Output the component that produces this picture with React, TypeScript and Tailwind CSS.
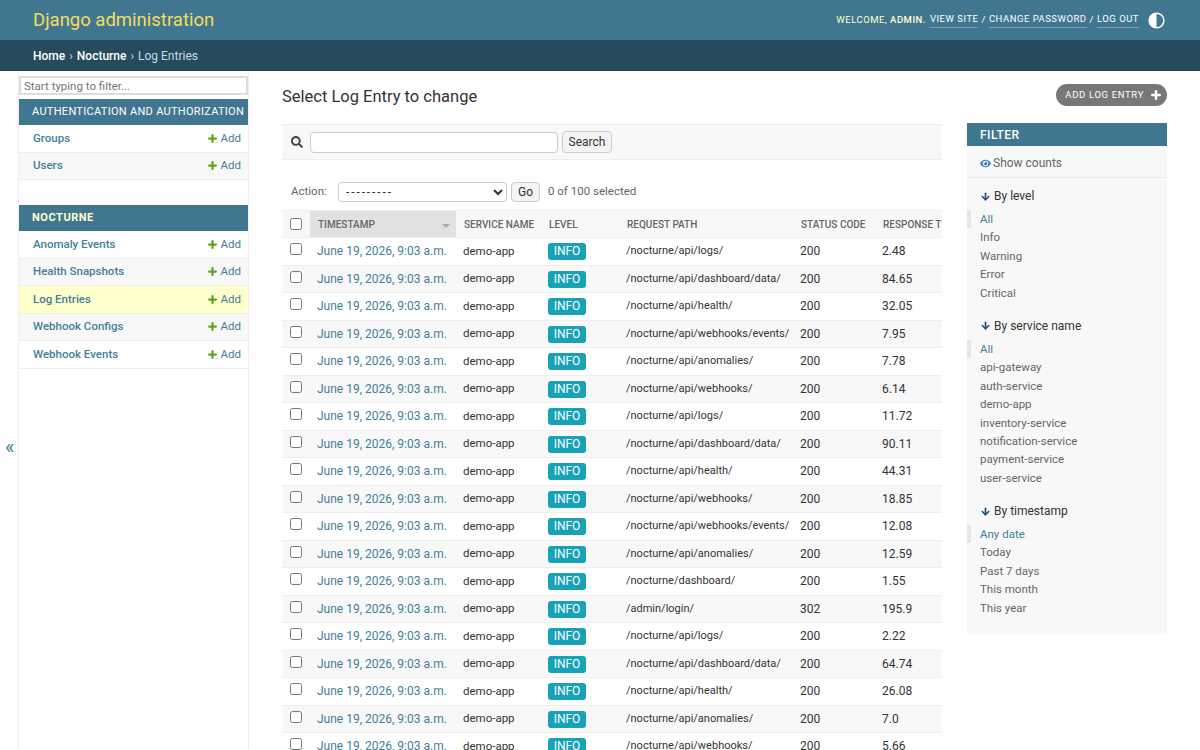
import { FaEye, FaSearch } from "react-icons/fa";
import { ArrowDown } from "lucide-react";

const BASE_PATH = "/nocturne/api";

const ROWS: [string, string, string][] = [
  [`${BASE_PATH}/logs/`, "200", "2.48"],
  [`${BASE_PATH}/dashboard/data/`, "200", "84.65"],
  [`${BASE_PATH}/health/`, "200", "32.05"],
  [`${BASE_PATH}/webhooks/events/`, "200", "7.95"],
  [`${BASE_PATH}/anomalies/`, "200", "7.78"],
  [`${BASE_PATH}/webhooks/`, "200", "6.14"],
  [`${BASE_PATH}/logs/`, "200", "11.72"],
  [`${BASE_PATH}/dashboard/data/`, "200", "90.11"],
  [`${BASE_PATH}/health/`, "200", "44.31"],
  [`${BASE_PATH}/webhooks/`, "200", "18.85"],
  [`${BASE_PATH}/webhooks/events/`, "200", "12.08"],
  [`${BASE_PATH}/anomalies/`, "200", "12.59"],
  ["/nocturne/dashboard/", "200", "1.55"],
  ["/admin/login/", "302", "195.9"],
  [`${BASE_PATH}/logs/`, "200", "2.22"],
  [`${BASE_PATH}/dashboard/data/`, "200", "64.74"],
  [`${BASE_PATH}/health/`, "200", "26.08"],
  [`${BASE_PATH}/anomalies/`, "200", "7.0"],
  [`${BASE_PATH}/webhooks/`, "200", "5.66"],
];

const FILTERS = [
  { title: "By level", items: ["All", "Info", "Warning", "Error", "Critical"] },
  {
    title: "By service name",
    items: ["All", "api-gateway", "auth-service", "demo-app", "inventory-service", "notification-service", "payment-service", "user-service"],
  },
  { title: "By timestamp", items: ["Any date", "Today", "Past 7 days", "This month", "This year"] },
];

function PlusIcon({ className }: { className: string }) {
  return (
    <svg viewBox="0 0 12 12" className={className} fill="none" stroke="currentColor" strokeWidth="3" strokeLinecap="round">
      <path d="M6 1.5v9M1.5 6h9" />
    </svg>
  );
}

function ModelRow({ name, shaded, current }: { name: string; shaded?: boolean; current?: boolean }) {
  return (
    <div
      className={`flex h-[27.5px] items-center justify-between border-b border-[#eeeeee] pl-[14px] pr-[7px] text-[11.5px] ${
        current ? "bg-[#ffffcc]" : shaded ? "bg-[#f8f8f8]" : "bg-white"
      }`}
    >
      <span className="font-medium text-[#447e9b]">{name}</span>
      <span className="flex items-center gap-[4px] text-[#447e9b]">
        <PlusIcon className="size-[9px] text-[#5fa225]" />
        Add
      </span>
    </div>
  );
}

function Sidebar() {
  return (
    <aside className="ml-[18px] w-[231px] shrink-0 border-x border-[#eeeeee]">
      <div className="pt-[5px]">
        <input
          placeholder="Start typing to filter..."
          className="block h-[19px] w-full border-2 border-[#dddddd] bg-white pl-[3px] text-[11.5px] text-[#333333] placeholder:text-[#757575]"
        />
      </div>
      <div className="mt-[4px] flex h-[26px] items-center bg-[#417690] pl-[13px] text-[11px] font-normal tracking-[0.3px] whitespace-nowrap text-white">
        AUTHENTICATION AND AUTHORIZATION
      </div>
      <ModelRow name="Groups" />
      <ModelRow name="Users" shaded />
      <div className="mt-[25px] flex h-[26px] items-center bg-[#417690] pl-[13px] text-[11px] font-bold tracking-[0.55px] text-[#ffffcc]">
        NOCTURNE
      </div>
      <ModelRow name="Anomaly Events" />
      <ModelRow name="Health Snapshots" shaded />
      <ModelRow name="Log Entries" current />
      <ModelRow name="Webhook Configs" shaded />
      <ModelRow name="Webhook Events" />
    </aside>
  );
}

function ChangeList() {
  return (
    <div className="ml-[10px] w-[660px] shrink-0">
      <div className="flex h-[36px] items-center border-y border-[#eeeeee] bg-[#f8f8f8] pl-[9px]">
        <FaSearch className="size-[12px] text-[#444444]" />
        <input className="ml-[7px] h-[21px] w-[248px] rounded-[4px] border border-[#cccccc] bg-white" />
        <button className="ml-[4px] h-[22px] w-[50px] rounded-[4px] border border-[#cccccc] bg-[#f4f4f4] text-[12px] text-[#333333]">
          Search
        </button>
      </div>
      <div className="flex h-[50px] items-end pb-[8px] pl-[9px] text-[11.5px] text-[#666666]">
        <div className="flex items-center">
          <span className="w-[47px] text-[#666666]">Action:</span>
          <select className="h-[20px] w-[169px] rounded-[4px] border border-[#cccccc] bg-white pl-[3px] text-[12px] tracking-[1.9px] text-[#333333]">
            <option>---------</option>
          </select>
          <button className="ml-[4px] h-[20px] w-[29px] rounded-[4px] border border-[#cccccc] bg-[#f4f4f4] text-[12px] text-[#333333]">
            Go
          </button>
          <span className="ml-[8px] -mt-[1px]">0 of 100 selected</span>
        </div>
      </div>
      <div className="overflow-hidden">
        <table className="w-[700px] table-fixed border-collapse text-[12px] text-[#333333]">
          <colgroup>
            <col className="w-[28px]" />
            <col className="w-[146px]" />
            <col className="w-[85px]" />
            <col className="w-[78px]" />
            <col className="w-[174px]" />
            <col className="w-[82px]" />
            <col className="w-[107px]" />
          </colgroup>
          <thead>
            <tr className="h-[27px] border-y border-[#eeeeee] bg-[#f8f8f8] text-left text-[10px] tracking-[0px] text-[#666666]">
              <th className="pl-[8px] font-normal">
                <input type="checkbox" className="block size-[12px]" />
              </th>
              <th className="relative bg-[#e1e1e1] pl-[8px] font-medium">
                TIMESTAMP
                <span className="absolute top-[13px] right-[6px] size-0 border-x-[4px] border-t-[4px] border-x-transparent border-t-[#aaaaaa]" />
              </th>
              <th className="pl-[8px] font-medium whitespace-nowrap">SERVICE NAME</th>
              <th className="pl-[8px] font-medium">LEVEL</th>
              <th className="pl-[8px] font-medium">REQUEST PATH</th>
              <th className="pl-[8px] font-medium whitespace-nowrap">STATUS CODE</th>
              <th className="pl-[8px] font-medium whitespace-nowrap">RESPONSE TIME (MS)</th>
            </tr>
          </thead>
          <tbody>
            {ROWS.map(([path, status, time], i) => (
              <tr key={i} className={`h-[27.5px] border-b border-[#eeeeee] ${i % 2 === 1 ? "bg-[#f8f8f8]" : "bg-white"}`}>
                <td className="pl-[8px]">
                  <input type="checkbox" className="-mt-[4px] block size-[12px]" />
                </td>
                <td className="pl-[7px] whitespace-nowrap text-[#447e9b]">June 19, 2026, 9:03 a.m.</td>
                <td className="pl-[7px] text-[11.5px]">demo-app</td>
                <td className="pl-[7px]">
                  <span className="inline-block h-[17px] w-[38px] rounded-[3px] bg-[#17a2b8] text-center text-[12px] leading-[17px] text-white">
                    INFO
                  </span>
                </td>
                <td className="pl-[7px] text-[11px] whitespace-nowrap">{path}</td>
                <td className="pl-[7px]">{status}</td>
                <td className="pl-[7px]">{time}</td>
              </tr>
            ))}
          </tbody>
        </table>
      </div>
    </div>
  );
}

function FilterPanel() {
  return (
    <div className="-mt-[1px] ml-[25px] w-[200px] shrink-0 self-start bg-[#f8f8f8] pb-[17px]">
      <div className="flex h-[23px] items-center bg-[#417690] pl-[13px] text-[12px] font-medium tracking-[0.5px] text-white">
        FILTER
      </div>
      <div className="flex h-[32px] items-center gap-[2px] border-b border-[#e8e8e8] pt-[3px] pl-[13px] text-[12px] text-[#666666]">
        <FaEye className="size-[11px] text-[#3f83c5]" />
        Show counts
      </div>
      {FILTERS.map((group) => (
        <div key={group.title} className="mb-[6px] last:mb-0">
          <div className="flex items-center gap-[3px] pt-[10px] pb-[6px] pl-[13px] text-[12px] leading-[16px] text-[#333333]">
            <ArrowDown className="size-[11px] text-[#1f4a80]" strokeWidth={3.5} />
            {group.title}
          </div>
          <ul className="text-[11.5px] text-[#666666]">
            {group.items.map((item, i) => (
              <li
                key={item}
                className={`h-[18.4px] border-l-4 pl-[9px] leading-[18px] ${
                  i === 0 ? "border-[#e6e6e6] text-[#447e9b]" : "border-transparent"
                }`}
              >
                {item}
              </li>
            ))}
          </ul>
        </div>
      ))}
    </div>
  );
}

export default function App() {
  return (
    <div className="relative h-screen overflow-hidden bg-white font-['Roboto','Liberation_Sans',sans-serif] text-[#333333]">
      <header className="flex h-[40px] items-center justify-between bg-[#417690] pr-[35px] pl-[33px]">
        <div className="pt-[2px] text-[18.5px] font-normal text-[#f5dd5d]">Django administration</div>
        <div className="flex items-center text-[9.5px] tracking-[0.5px] text-white">
          <span className="text-[#ffffcc]">
            WELCOME, <span className="font-medium">ADMIN.</span>
          </span>
          <span className="ml-[4px] border-b border-white/30">VIEW SITE</span>
          <span className="mx-[3px]">/</span>
          <span className="border-b border-white/30">CHANGE PASSWORD</span>
          <span className="mx-[3px]">/</span>
          <span className="border-b border-white/30">LOG OUT</span>
          <svg viewBox="0 0 18 18" className="ml-[9px] size-[17px]">
            <circle cx="9" cy="9" r="7.8" fill="none" stroke="white" strokeWidth="1.6" />
            <path d="M9 1.2a7.8 7.8 0 0 0 0 15.6z" fill="white" />
          </svg>
        </div>
      </header>
      <nav className="flex h-[31px] items-center border-b border-[#1f3f4f] bg-[#264b5d] pt-[1px] pl-[33px] text-[12px] text-[#c4dce8]">
        <span className="font-medium text-white">Home</span>
        <span className="mx-[4px]">›</span>
        <span className="font-medium text-white">Nocturne</span>
        <span className="mx-[4px]">›</span>
        <span>Log Entries</span>
      </nav>
      <div className="flex h-[679px]">
        <Sidebar />
        <main className="min-w-0 flex-1 pl-[23px]">
          <div className="flex h-[53px] items-start">
            <h1 className="mt-[14px] ml-[10px] flex-1 text-[16.5px] font-normal text-[#333333]">Select Log Entry to change</h1>
            <span className="mt-[13px] mr-[33px] flex h-[22px] items-center gap-[7px] rounded-[11px] bg-[#777777] pr-[6px] pl-[9px] text-[9.5px] font-normal tracking-[0.65px] text-white">
              ADD LOG ENTRY
              <PlusIcon className="size-[10px] text-white" />
            </span>
          </div>
          <div className="flex">
            <ChangeList />
            <FilterPanel />
          </div>
        </main>
      </div>
      <span className="absolute top-[432px] left-[5px] text-[20px] text-[#447e9b]">«</span>
    </div>
  );
}
